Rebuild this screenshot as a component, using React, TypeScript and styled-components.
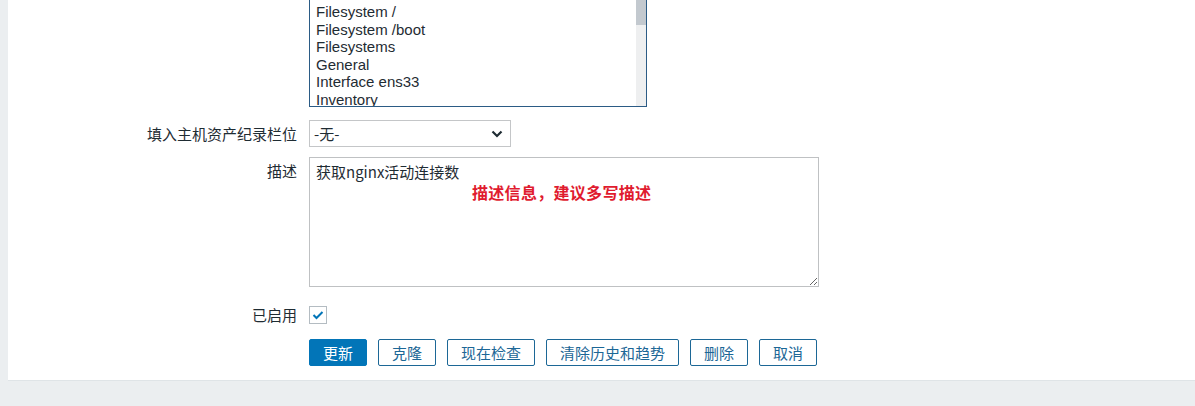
import React from "react";
import styled, { createGlobalStyle } from "styled-components";

const GlobalStyle = createGlobalStyle`
  html, body { margin: 0; padding: 0; background: #ebeef0; }
  body {
    font-family: "Liberation Sans", "Noto Sans CJK SC", Arial, sans-serif;
    color: #1f2c33;
  }
`;

const FONT = `"Liberation Sans", "Noto Sans CJK SC", Arial, sans-serif`;
const CJK = `"Noto Sans CJK SC", "Liberation Sans", sans-serif`;

const Page = styled.div`
  min-height: 406px;
  padding-left: 8px;
  overflow: hidden;
`;

const Panel = styled.div`
  background: #ffffff;
  border-bottom: 1px solid #dfe4e7;
  padding-bottom: 14px;
`;

const Form = styled.div`
  display: flex;
  flex-direction: column;
  margin-top: -20px;
`;

const Row = styled.div<{ $mt: number }>`
  display: grid;
  grid-template-columns: 289px auto;
  column-gap: 12px;
  align-items: start;
  justify-content: start;
  margin-top: ${(p) => p.$mt}px;
`;

const Label = styled.div<{ $lh: number; $pt?: number }>`
  text-align: right;
  font-family: ${CJK};
  font-size: 15px;
  line-height: ${(p) => p.$lh}px;
  padding-top: ${(p) => p.$pt ?? 0}px;
  color: #1f2c33;
  white-space: nowrap;
`;

const Listbox = styled.div`
  box-sizing: border-box;
  width: 338px;
  height: 127px;
  border: 1px solid #2b5b85;
  display: flex;
  background: #fff;
`;

const ItemList = styled.div`
  flex: 1;
  overflow: hidden;
  padding: 22px 0 0 6px;
`;

const Item = styled.div`
  font-family: ${FONT};
  font-size: 15px;
  line-height: 17.6px;
  color: #1f2c33;
  white-space: nowrap;
`;

const ScrollTrack = styled.div`
  width: 10px;
  background: #eeeff0;
  display: flex;
  flex-direction: column;
`;

const ScrollThumb = styled.div`
  height: 44px;
  background: #c3c9cf;
`;

const SelectBox = styled.div`
  box-sizing: border-box;
  width: 202px;
  height: 27px;
  border: 1px solid #c4c6c8;
  display: flex;
  align-items: center;
  justify-content: space-between;
  padding: 0 7px 0 4px;
  font-family: ${CJK};
  font-size: 15px;
  color: #1f2c33;
  background: #fff;
`;

const TextareaWrap = styled.div`
  position: relative;
  width: 510px;
  height: 130px;
`;

const TextArea = styled.textarea`
  box-sizing: border-box;
  width: 510px;
  height: 130px;
  border: 1px solid #bfc1c3;
  border-radius: 0;
  padding: 5px 6px;
  margin: 0;
  font-family: ${CJK};
  font-size: 15px;
  line-height: 18px;
  color: #1f2c33;
  resize: both;
  outline: none;
  display: block;
`;

const Annotation = styled.span`
  position: absolute;
  left: 163px;
  top: 25px;
  font-family: ${CJK};
  font-size: 16px;
  font-weight: 700;
  line-height: 20px;
  letter-spacing: 0.3px;
  color: #e01b2f;
  pointer-events: none;
  white-space: nowrap;
`;

const CheckBox = styled.div`
  box-sizing: border-box;
  width: 18px;
  height: 18px;
  border: 1px solid #b4bcc2;
  background: #fff;
  display: flex;
  align-items: center;
  justify-content: center;
`;

const ButtonRow = styled.div`
  display: flex;
  gap: 11px;
`;

const Button = styled.button<{ $primary?: boolean }>`
  box-sizing: border-box;
  height: 27px;
  padding: 0 13px;
  margin: 0;
  border-radius: 2px;
  border: 1px solid ${(p) => (p.$primary ? "#0275b8" : "#1c6796")};
  background: ${(p) => (p.$primary ? "#0275b8" : "#ffffff")};
  color: ${(p) => (p.$primary ? "#ffffff" : "#1c6796")};
  font-family: ${CJK};
  font-size: 15px;
  line-height: 25px;
  cursor: pointer;
  white-space: nowrap;
`;

const items = [
  "Filesystem /",
  "Filesystem /boot",
  "Filesystems",
  "General",
  "Interface ens33",
  "Inventory",
];

const buttons = ["克隆", "现在检查", "清除历史和趋势", "删除", "取消"];

export default function App() {
  return (
    <>
      <GlobalStyle />
      <Page>
        <Panel>
          <Form>
            <Row $mt={0}>
              <Label $lh={18} />
              <Listbox>
                <ItemList>
                  {items.map((it) => (
                    <Item key={it}>{it}</Item>
                  ))}
                </ItemList>
                <ScrollTrack>
                  <ScrollThumb />
                </ScrollTrack>
              </Listbox>
            </Row>

            <Row $mt={13}>
              <Label $lh={27}>填入主机资产纪录栏位</Label>
              <SelectBox>
                <span>-无-</span>
                <svg width="12" height="8" viewBox="0 0 12 8">
                  <polyline
                    points="1.5,1.5 6,6 10.5,1.5"
                    fill="none"
                    stroke="#1f2c33"
                    strokeWidth="2.2"
                  />
                </svg>
              </SelectBox>
            </Row>

            <Row $mt={10}>
              <Label $lh={18} $pt={5}>
                描述
              </Label>
              <TextareaWrap>
                <TextArea readOnly defaultValue="获取nginx活动连接数" />
                <Annotation>描述信息，建议多写描述</Annotation>
              </TextareaWrap>
            </Row>

            <Row $mt={19}>
              <Label $lh={18}>已启用</Label>
              <CheckBox>
                <svg width="12" height="10" viewBox="0 0 12 10">
                  <polyline
                    points="1.5,5 4.5,8 10.5,2"
                    fill="none"
                    stroke="#0275b8"
                    strokeWidth="2"
                  />
                </svg>
              </CheckBox>
            </Row>

            <Row $mt={15}>
              <Label $lh={27} />
              <ButtonRow>
                <Button $primary>更新</Button>
                {buttons.map((b) => (
                  <Button key={b}>{b}</Button>
                ))}
              </ButtonRow>
            </Row>
          </Form>
        </Panel>
      </Page>
    </>
  );
}
